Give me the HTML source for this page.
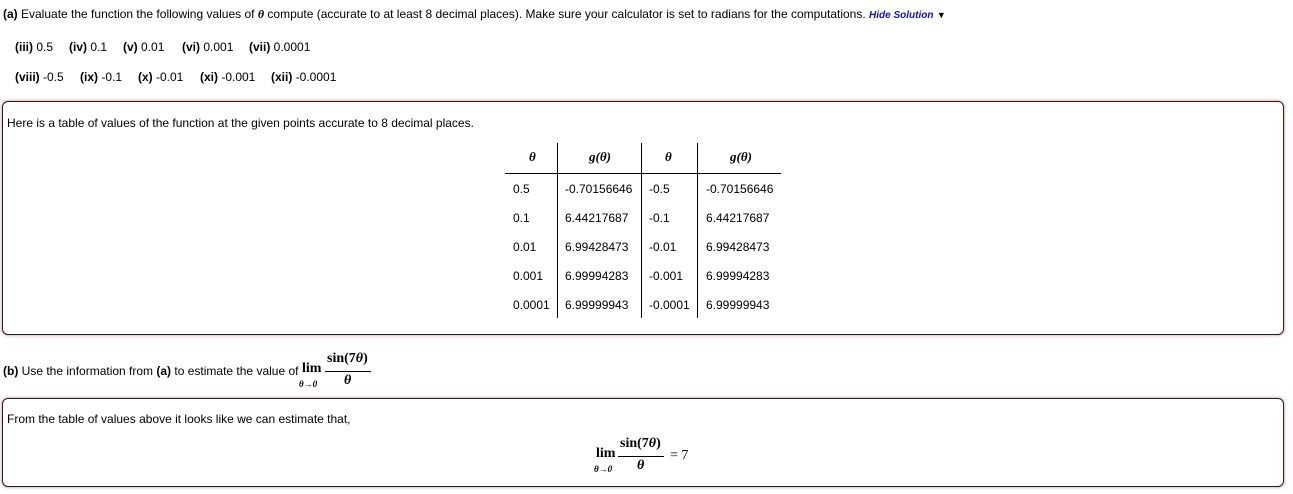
<!DOCTYPE html>
<html><head><style>
body{margin:0;width:1293px;height:494px;background:#fff;font-family:"Liberation Sans",Arial,sans-serif;font-size:12px;color:#000;position:relative;overflow:hidden}
.a{position:absolute;white-space:nowrap;line-height:14px}
.m{font-family:"Liberation Serif",serif}
.box{position:absolute;border:1px solid #222;border-radius:6px;box-shadow:0 0 2px 1px #e8b4b4}
.vl{position:absolute;width:1px;background:#000;top:143px;height:175px}
</style></head><body>
<div class="a" style="left:3px;top:7px"><b>(a)</b> Evaluate the function the following values of <i class="m" style="font-weight:bold">θ</i> compute (accurate to at least 8 decimal places). Make sure your calculator is set to radians for the computations. <i style="color:#1010c0;font-size:10px;font-weight:bold">Hide Solution</i> <span style="font-size:9px">▼</span></div>
<div class="a" style="left:15px;top:40px"><b>(iii)</b> 0.5</div>
<div class="a" style="left:69px;top:40px"><b>(iv)</b> 0.1</div>
<div class="a" style="left:123px;top:40px"><b>(v)</b> 0.01</div>
<div class="a" style="left:182px;top:40px"><b>(vi)</b> 0.001</div>
<div class="a" style="left:249px;top:40px"><b>(vii)</b> 0.0001</div>
<div class="a" style="left:15px;top:70px"><b>(viii)</b> -0.5</div>
<div class="a" style="left:80px;top:70px"><b>(ix)</b> -0.1</div>
<div class="a" style="left:138px;top:70px"><b>(x)</b> -0.01</div>
<div class="a" style="left:200px;top:70px"><b>(xi)</b> -0.001</div>
<div class="a" style="left:271px;top:70px"><b>(xii)</b> -0.0001</div>
<div class="box" style="left:2px;top:101px;width:1280px;height:232px"></div>
<div class="a" style="left:7px;top:116px">Here is a table of values of the function at the given points accurate to 8 decimal places.</div>
<div class="vl" style="left:557px"></div><div class="vl" style="left:641px"></div><div class="vl" style="left:697px"></div>
<div style="position:absolute;left:505px;top:173px;width:276px;height:1px;background:#000"></div>
<div class="a m" style="left:529px;top:150px;font-style:italic;font-weight:bold;font-size:13px">θ</div>
<div class="a m" style="left:589px;top:150px;font-style:italic;font-weight:bold;font-size:13px">g(θ)</div>
<div class="a m" style="left:665px;top:150px;font-style:italic;font-weight:bold;font-size:13px">θ</div>
<div class="a m" style="left:730px;top:150px;font-style:italic;font-weight:bold;font-size:13px">g(θ)</div>
<div class="a" style="left:513px;top:175px;line-height:29px">0.5<br>0.1<br>0.01<br>0.001<br>0.0001</div>
<div class="a" style="left:565px;top:175px;line-height:29px">-0.70156646<br>6.44217687<br>6.99428473<br>6.99994283<br>6.99999943</div>
<div class="a" style="left:649px;top:175px;line-height:29px">-0.5<br>-0.1<br>-0.01<br>-0.001<br>-0.0001</div>
<div class="a" style="left:706px;top:175px;line-height:29px">-0.70156646<br>6.44217687<br>6.99428473<br>6.99994283<br>6.99999943</div>
<div class="a" style="left:3px;top:364px"><b>(b)</b> Use the information from <b>(a)</b> to estimate the value of</div>
<div class="a m" style="left:302px;top:362px;font-weight:bold;font-size:14px">lim</div>
<div class="a m" style="left:299px;top:377px;font-weight:bold;font-style:italic;font-size:9px">θ→0</div>
<div class="a m" style="left:327px;top:352px;font-weight:bold;font-size:14px">sin(7<i>θ</i>)</div>
<div style="position:absolute;left:325px;top:371px;width:46px;height:1px;background:#000"></div>
<div class="a m" style="left:344px;top:374px;font-weight:bold;font-style:italic;font-size:14px">θ</div>
<div class="box" style="left:2px;top:398px;width:1280px;height:87px"></div>
<div class="a" style="left:7px;top:412px">From the table of values above it looks like we can estimate that,</div>
<div class="a m" style="left:596px;top:447px;font-weight:bold;font-size:14px">lim</div>
<div class="a m" style="left:594px;top:462px;font-weight:bold;font-style:italic;font-size:9px">θ→0</div>
<div class="a m" style="left:620px;top:437px;font-weight:bold;font-size:14px">sin(7<i>θ</i>)</div>
<div style="position:absolute;left:618px;top:456px;width:46px;height:1px;background:#000"></div>
<div class="a m" style="left:637px;top:459px;font-weight:bold;font-style:italic;font-size:14px">θ</div>
<div class="a m" style="left:670px;top:449px;font-size:14px">= 7</div>
</body></html>
